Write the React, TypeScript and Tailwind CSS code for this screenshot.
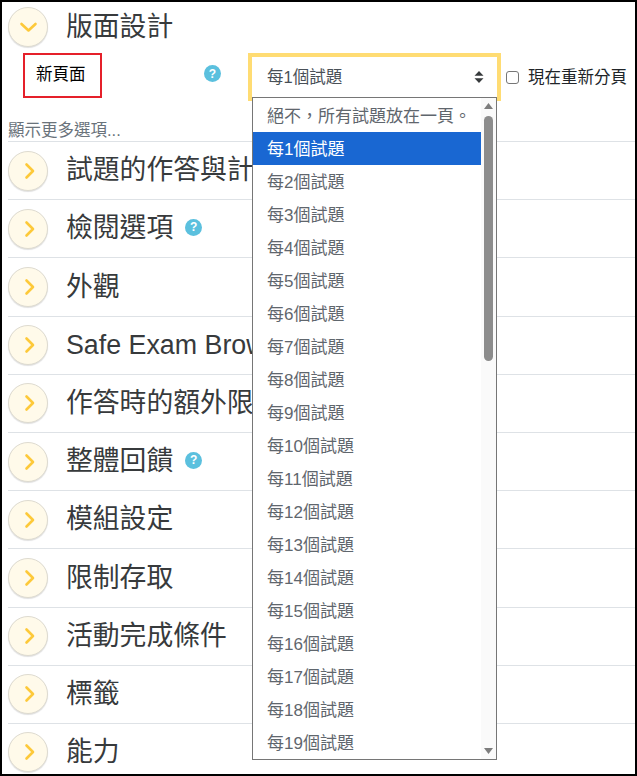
const font = { fontFamily: '"Liberation Sans", "Noto Sans CJK TC", sans-serif' };

function Circle({ open = false }: { open?: boolean }) {
  return (
    <div className="flex h-10 w-10 shrink-0 items-center justify-center rounded-full border border-[#dedbd0] bg-[#fffaea] shadow-[0_1px_1px_rgba(0,0,0,0.12)]">
      <svg width="20" height="20" viewBox="0 0 20 20" fill="none" stroke="#fdc93a" strokeWidth="2.600" strokeLinecap="round" strokeLinejoin="round">
        {open ? <path d="M3.500 7l7 6.500 7-6.500" /> : <path d="M8.500 3.500L15 10l-6.500 6.500" />}
      </svg>
    </div>
  );
}

function Help() {
  return (
    <span className="flex h-[17px] w-[17px] shrink-0 items-center justify-center rounded-full bg-[#5bc0de] text-[12px] font-bold leading-none text-white">?</span>
  );
}

const rows: { label: string; help?: boolean }[] = [
  { label: "試題的作答與計分" },
  { label: "檢閱選項", help: true },
  { label: "外觀" },
  { label: "Safe Exam Browser" },
  { label: "作答時的額外限制" },
  { label: "整體回饋", help: true },
  { label: "模組設定" },
  { label: "限制存取" },
  { label: "活動完成條件" },
  { label: "標籤" },
  { label: "能力" },
];

const options = ["絕不，所有試題放在一頁。", ...Array.from({ length: 19 }, (_, i) => `每${i + 1}個試題`)];

export default function App() {
  return (
    <div style={font} className="relative h-[776px] w-[637px] overflow-hidden border-2 border-black bg-white pl-[6px] text-[#373a3c]">
      <div className="flex h-[48px] items-center gap-[18px] pt-[2px]">
        <Circle open />
        <span className="text-[26.800px] leading-none">版面設計</span>
      </div>

      <div className="relative h-[91px] pt-[3px]">
        <div className="ml-[15px] flex h-[45px] w-[79px] items-start border-2 border-[#e5202a] pl-[11px] pt-[9px] text-[16.500px] leading-[20px] text-black">
          新頁面
        </div>
        <div className="absolute left-[196px] top-[15px]">
          <Help />
        </div>
        <div className="absolute left-[240px] top-[3px] flex h-[48px] w-[253px] items-center justify-between border-4 border-[#ffdc73] bg-white pl-[15px] pr-[13px] text-[16.500px] text-[#495057]">
          <span>每1個試題</span>
          <svg width="10" height="14" viewBox="0 0 10 14" fill="#373a3c">
            <path d="M5 1l4.500 4.800H.5zM5 13L.5 8.200h9z" />
          </svg>
        </div>
        <div className="absolute left-[498px] top-[17px] flex items-center gap-[9px] text-[16.500px] leading-[20px] text-[#212529]">
          <span className="h-[13px] w-[13px] rounded-[3px] border border-[#767676] bg-white" />
          <span>現在重新分頁</span>
        </div>
        <div className="absolute left-0 top-[70px] whitespace-nowrap text-[16.500px] leading-[20px] text-[#6a737b]">顯示更多選項...</div>
      </div>

      {rows.map((r) => (
        <div key={r.label} className="flex h-[58.200px] items-center gap-[18px] border-t border-[#dee2e6]">
          <Circle />
          <span className="whitespace-nowrap text-[26.800px] leading-none">{r.label}</span>
          {r.help && <div className="-ml-[6px] -mt-[3px]"><Help /></div>}
        </div>
      ))}

      <div className="absolute left-[250px] top-[95px] h-[663px] w-[245px] overflow-hidden border border-[#767676] bg-white text-[17px] text-[#5f666d]">
        <div className="flex h-full">
          <div className="w-[228px] shrink-0 pt-[1px]">
            {options.map((o, i) => (
              <div key={o} className={`flex h-[33px] items-center whitespace-nowrap pl-[14px] pt-[3px] ${i === 1 ? "bg-[#1967d2] text-white" : ""}`}>
                {o}
              </div>
            ))}
          </div>
          <div className="relative flex-1 bg-[#fafafa]">
            <svg className="absolute left-[2px] top-[4px]" width="11" height="8" viewBox="0 0 11 8" fill="#7d7d7d"><path d="M5.500 1l4.500 6H1z" /></svg>
            <div className="absolute left-[2.500px] top-[18px] h-[245px] w-[9px] rounded-full bg-[#8c8c8c]" />
            <svg className="absolute bottom-[4px] left-[2px]" width="11" height="8" viewBox="0 0 11 8" fill="#7d7d7d"><path d="M5.500 7l4.500-6H1z" /></svg>
          </div>
        </div>
      </div>
    </div>
  );
}
